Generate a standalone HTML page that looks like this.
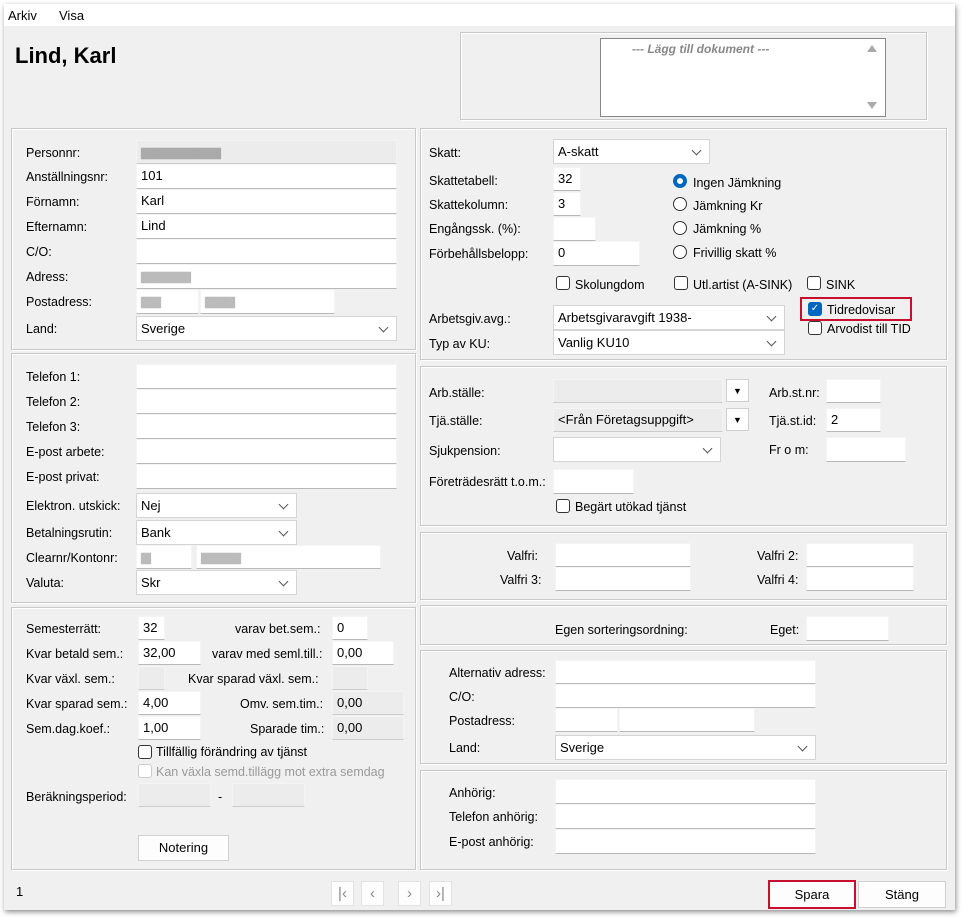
<!DOCTYPE html>
<html><head><meta charset="utf-8"><style>
*{margin:0;padding:0;box-sizing:border-box}
body{width:965px;height:919px;background:#fff;position:relative;font-family:"Liberation Sans",sans-serif;font-size:12px;color:#000;overflow:hidden}
.win{position:absolute;left:4px;top:4px;width:951px;height:906px;background:#f0f0f0;box-shadow:1px 2px 5px rgba(0,0,0,.45)}
.menu{position:absolute;left:4px;top:4px;width:951px;height:22px;background:#fff}
.a{position:absolute;white-space:nowrap}
.g{position:absolute;border:1px solid #c8c8c8;box-shadow:inset 1px 1px 0 #fff,1px 1px 0 #fff}
.i{position:absolute;background:#fff;border:1px solid #f4f4f4;border-bottom:1px solid #b8b8b8;padding:2px 0 0 4px;font-size:13px;line-height:18px}
.gr{background:#ececec;border-bottom-color:#ccc}
.d{position:absolute;background:#fff;border:1px solid #d4d4d4;padding:3px 0 0 4px;font-size:13px;line-height:17px}
.d:after{content:"";position:absolute;right:9px;top:7px;width:6px;height:6px;border-right:1px solid #555;border-bottom:1px solid #555;transform:rotate(45deg)}
.l{position:absolute;white-space:nowrap;font-size:12.5px}
.cb{position:absolute;width:14px;height:14px;border:1px solid #333;border-radius:3px;background:#fff}
.rb{position:absolute;width:14px;height:14px;border:1px solid #333;border-radius:50%;background:#fff}
.btn{position:absolute;background:#fdfdfd;border:1px solid #d0d0d0;text-align:center;font-size:13px}
.bl{color:#bbb}
</style></head><body>
<div class="win"></div>
<div class="menu"></div>
<div class="a" style="left:8px;top:8px;font-size:13px">Arkiv</div>
<div class="a" style="left:59px;top:8px;font-size:13px">Visa</div>
<div class="a" style="left:15px;top:43px;font-size:22px;font-weight:bold">Lind, Karl</div>

<div class="g" style="left:460px;top:32px;width:467px;height:88px"></div>
<div class="a" style="left:600px;top:38px;width:286px;height:79px;background:#fff;border:1px solid #888"></div>
<div class="a" style="left:632px;top:42px;font-size:12px;font-style:italic;font-weight:bold;color:#888">--- Lägg till dokument ---</div>
<div class="a" style="left:867px;top:45px;width:0;height:0;border-left:5px solid transparent;border-right:5px solid transparent;border-bottom:7px solid #aaa"></div>
<div class="a" style="left:867px;top:102px;width:0;height:0;border-left:5px solid transparent;border-right:5px solid transparent;border-top:7px solid #aaa"></div>

<div class="g" style="left:11px;top:128px;width:405px;height:222px"></div>
<div class="g" style="left:11px;top:353px;width:405px;height:250px"></div>
<div class="g" style="left:11px;top:607px;width:405px;height:263px"></div>

<div class="l" style="left:26px;top:146px">Personnr:</div>
<div class="i gr bl" style="left:136px;top:140px;width:261px;height:24px;color:#aaa">▆▆▆▆▆▆▆▆</div>
<div class="l" style="left:26px;top:170px">Anställningsnr:</div>
<div class="i" style="left:136px;top:164px;width:261px;height:25px">101</div>
<div class="l" style="left:26px;top:195px">Förnamn:</div>
<div class="i" style="left:136px;top:189px;width:261px;height:25px">Karl</div>
<div class="l" style="left:26px;top:220px">Efternamn:</div>
<div class="i" style="left:136px;top:214px;width:261px;height:25px">Lind</div>
<div class="l" style="left:26px;top:245px">C/O:</div>
<div class="i" style="left:136px;top:239px;width:261px;height:25px"></div>
<div class="l" style="left:26px;top:270px">Adress:</div>
<div class="i bl" style="left:136px;top:264px;width:261px;height:25px">▆▆▆▆▆</div>
<div class="l" style="left:26px;top:295px">Postadress:</div>
<div class="i bl" style="left:136px;top:289px;width:63px;height:25px">▆▆</div>
<div class="i bl" style="left:200px;top:289px;width:135px;height:25px">▆▆▆</div>
<div class="l" style="left:26px;top:322px">Land:</div>
<div class="d" style="left:136px;top:316px;width:261px;height:25px">Sverige</div>

<div class="l" style="left:26px;top:370px">Telefon 1:</div>
<div class="i" style="left:136px;top:364px;width:261px;height:25px"></div>
<div class="l" style="left:26px;top:395px">Telefon 2:</div>
<div class="i" style="left:136px;top:389px;width:261px;height:25px"></div>
<div class="l" style="left:26px;top:420px">Telefon 3:</div>
<div class="i" style="left:136px;top:414px;width:261px;height:25px"></div>
<div class="l" style="left:26px;top:445px">E-post arbete:</div>
<div class="i" style="left:136px;top:439px;width:261px;height:25px"></div>
<div class="l" style="left:26px;top:470px">E-post privat:</div>
<div class="i" style="left:136px;top:464px;width:261px;height:25px"></div>
<div class="l" style="left:26px;top:499px">Elektron. utskick:</div>
<div class="d" style="left:136px;top:493px;width:161px;height:25px">Nej</div>
<div class="l" style="left:26px;top:526px">Betalningsrutin:</div>
<div class="d" style="left:136px;top:520px;width:161px;height:25px">Bank</div>
<div class="l" style="left:26px;top:551px">Clearnr/Kontonr:</div>
<div class="i bl" style="left:136px;top:545px;width:56px;height:24px">▆</div>
<div class="i bl" style="left:196px;top:545px;width:185px;height:24px">▆▆▆▆</div>
<div class="l" style="left:26px;top:576px">Valuta:</div>
<div class="d" style="left:136px;top:570px;width:161px;height:25px">Skr</div>

<div class="l" style="left:26px;top:622px">Semesterrätt:</div>
<div class="i" style="left:138px;top:616px;width:27px;height:24px">32</div>
<div class="l" style="left:235px;top:622px">varav bet.sem.:</div>
<div class="i" style="left:332px;top:616px;width:36px;height:24px">0</div>
<div class="l" style="left:26px;top:647px">Kvar betald sem.:</div>
<div class="i" style="left:138px;top:641px;width:63px;height:24px">32,00</div>
<div class="l" style="left:212px;top:647px">varav med seml.till.:</div>
<div class="i" style="left:332px;top:641px;width:62px;height:24px">0,00</div>
<div class="l" style="left:26px;top:672px">Kvar växl. sem.:</div>
<div class="i gr" style="left:138px;top:666px;width:27px;height:24px"></div>
<div class="l" style="left:188px;top:672px">Kvar sparad växl. sem.:</div>
<div class="i gr" style="left:332px;top:666px;width:36px;height:24px"></div>
<div class="l" style="left:26px;top:697px">Kvar sparad sem.:</div>
<div class="i" style="left:138px;top:691px;width:63px;height:24px">4,00</div>
<div class="l" style="left:240px;top:697px">Omv. sem.tim.:</div>
<div class="i gr" style="left:332px;top:691px;width:72px;height:24px">0,00</div>
<div class="l" style="left:26px;top:722px">Sem.dag.koef.:</div>
<div class="i" style="left:138px;top:716px;width:63px;height:24px">1,00</div>
<div class="l" style="left:250px;top:722px">Sparade tim.:</div>
<div class="i gr" style="left:332px;top:716px;width:72px;height:24px">0,00</div>
<div class="cb" style="left:138px;top:745px"></div>
<div class="l" style="left:156px;top:745px">Tillfällig förändring av tjänst</div>
<div class="cb" style="left:138px;top:764px;border-color:#ccc"></div>
<div class="l" style="left:156px;top:765px;color:#999">Kan växla semd.tillägg mot extra semdag</div>
<div class="l" style="left:26px;top:790px">Beräkningsperiod:</div>
<div class="i gr" style="left:138px;top:783px;width:73px;height:24px"></div>
<div class="l" style="left:218px;top:790px">-</div>
<div class="i gr" style="left:232px;top:783px;width:73px;height:24px"></div>
<div class="btn" style="left:138px;top:835px;width:91px;height:26px;line-height:24px">Notering</div>

<div class="g" style="left:420px;top:128px;width:527px;height:232px"></div>
<div class="g" style="left:420px;top:366px;width:527px;height:160px"></div>
<div class="g" style="left:420px;top:532px;width:527px;height:68px"></div>
<div class="g" style="left:420px;top:605px;width:527px;height:40px"></div>
<div class="g" style="left:420px;top:650px;width:527px;height:114px"></div>
<div class="g" style="left:420px;top:770px;width:527px;height:100px"></div>

<div class="l" style="left:429px;top:146px">Skatt:</div>
<div class="d" style="left:553px;top:139px;width:157px;height:25px">A-skatt</div>
<div class="l" style="left:429px;top:174px">Skattetabell:</div>
<div class="i" style="left:553px;top:167px;width:28px;height:24px">32</div>
<div class="l" style="left:429px;top:198px">Skattekolumn:</div>
<div class="i" style="left:553px;top:192px;width:28px;height:24px">3</div>
<div class="l" style="left:429px;top:222px">Engångssk. (%):</div>
<div class="i" style="left:553px;top:217px;width:43px;height:24px"></div>
<div class="l" style="left:429px;top:247px">Förbehållsbelopp:</div>
<div class="i" style="left:553px;top:241px;width:87px;height:25px">0</div>
<div class="rb" style="left:673px;top:174px;border:4px solid #0067c0"></div>
<div class="l" style="left:693px;top:176px">Ingen Jämkning</div>
<div class="rb" style="left:673px;top:197px"></div>
<div class="l" style="left:693px;top:199px">Jämkning Kr</div>
<div class="rb" style="left:673px;top:221px"></div>
<div class="l" style="left:693px;top:222px">Jämkning %</div>
<div class="rb" style="left:673px;top:245px"></div>
<div class="l" style="left:693px;top:246px">Frivillig skatt %</div>
<div class="cb" style="left:556px;top:276px"></div>
<div class="l" style="left:575px;top:278px">Skolungdom</div>
<div class="cb" style="left:674px;top:276px"></div>
<div class="l" style="left:693px;top:278px">Utl.artist (A-SINK)</div>
<div class="cb" style="left:807px;top:276px"></div>
<div class="l" style="left:826px;top:278px">SINK</div>
<div class="a" style="left:800px;top:297px;width:112px;height:24px;border:2px solid #c8102e"></div>
<div class="cb" style="left:808px;top:302px;background:#0067c0;border-color:#0067c0;color:#fff;font-size:10px;line-height:12px;text-align:center">✓</div>
<div class="l" style="left:827px;top:303px">Tidredovisar</div>
<div class="cb" style="left:808px;top:321px"></div>
<div class="l" style="left:827px;top:322px">Arvodist till TID</div>
<div class="l" style="left:429px;top:312px">Arbetsgiv.avg.:</div>
<div class="d" style="left:553px;top:305px;width:232px;height:25px">Arbetsgivaravgift 1938-</div>
<div class="l" style="left:429px;top:337px">Typ av KU:</div>
<div class="d" style="left:553px;top:330px;width:232px;height:25px">Vanlig KU10</div>

<div class="l" style="left:429px;top:386px">Arb.ställe:</div>
<div class="i gr" style="left:553px;top:379px;width:170px;height:24px"></div>
<div class="btn" style="left:726px;top:379px;width:23px;height:23px;font-size:9px;line-height:22px">▼</div>
<div class="l" style="left:769px;top:386px">Arb.st.nr:</div>
<div class="i" style="left:826px;top:379px;width:55px;height:24px"></div>
<div class="l" style="left:429px;top:414px">Tjä.ställe:</div>
<div class="i gr" style="left:553px;top:408px;width:170px;height:24px">&lt;Från Företagsuppgift&gt;</div>
<div class="btn" style="left:726px;top:408px;width:23px;height:23px;font-size:9px;line-height:22px">▼</div>
<div class="l" style="left:769px;top:414px">Tjä.st.id:</div>
<div class="i" style="left:826px;top:408px;width:55px;height:24px">2</div>
<div class="l" style="left:429px;top:444px">Sjukpension:</div>
<div class="d" style="left:553px;top:437px;width:168px;height:25px"></div>
<div class="l" style="left:769px;top:443px">Fr o m:</div>
<div class="i" style="left:826px;top:437px;width:80px;height:25px"></div>
<div class="l" style="left:429px;top:475px">Företrädesrätt t.o.m.:</div>
<div class="i" style="left:553px;top:469px;width:81px;height:25px"></div>
<div class="cb" style="left:556px;top:499px"></div>
<div class="l" style="left:575px;top:500px">Begärt utökad tjänst</div>

<div class="l" style="left:507px;top:549px">Valfri:</div>
<div class="i" style="left:555px;top:543px;width:136px;height:24px"></div>
<div class="l" style="left:500px;top:573px">Valfri 3:</div>
<div class="i" style="left:555px;top:567px;width:136px;height:24px"></div>
<div class="l" style="left:757px;top:549px">Valfri 2:</div>
<div class="i" style="left:806px;top:543px;width:108px;height:24px"></div>
<div class="l" style="left:757px;top:573px">Valfri 4:</div>
<div class="i" style="left:806px;top:567px;width:108px;height:24px"></div>

<div class="l" style="left:555px;top:623px">Egen sorteringsordning:</div>
<div class="l" style="left:770px;top:623px">Eget:</div>
<div class="i" style="left:806px;top:616px;width:83px;height:25px"></div>

<div class="l" style="left:449px;top:666px">Alternativ adress:</div>
<div class="i" style="left:555px;top:660px;width:261px;height:24px"></div>
<div class="l" style="left:449px;top:690px">C/O:</div>
<div class="i" style="left:555px;top:684px;width:261px;height:24px"></div>
<div class="l" style="left:449px;top:714px">Postadress:</div>
<div class="i" style="left:555px;top:708px;width:63px;height:24px"></div>
<div class="i" style="left:619px;top:708px;width:136px;height:24px"></div>
<div class="l" style="left:449px;top:741px">Land:</div>
<div class="d" style="left:555px;top:735px;width:261px;height:25px">Sverige</div>

<div class="l" style="left:449px;top:786px">Anhörig:</div>
<div class="i" style="left:555px;top:779px;width:261px;height:25px"></div>
<div class="l" style="left:449px;top:810px">Telefon anhörig:</div>
<div class="i" style="left:555px;top:804px;width:261px;height:25px"></div>
<div class="l" style="left:449px;top:835px">E-post anhörig:</div>
<div class="i" style="left:555px;top:829px;width:261px;height:25px"></div>

<div class="l" style="left:16px;top:884px;font-size:13px">1</div>
<div class="btn" style="left:331px;top:881px;width:23px;height:25px;color:#888;font-size:15px;line-height:23px;border-color:#e2e2e2">|&lsaquo;</div>
<div class="btn" style="left:361px;top:881px;width:23px;height:25px;color:#888;font-size:15px;line-height:23px;border-color:#e2e2e2">&lsaquo;</div>
<div class="btn" style="left:398px;top:881px;width:23px;height:25px;color:#888;font-size:15px;line-height:23px;border-color:#e2e2e2">&rsaquo;</div>
<div class="btn" style="left:429px;top:881px;width:23px;height:25px;color:#888;font-size:15px;line-height:23px;border-color:#e2e2e2">&rsaquo;|</div>
<div class="btn" style="left:768px;top:880px;width:88px;height:29px;line-height:25px;border:2px solid #c8102e">Spara</div>
<div class="btn" style="left:858px;top:881px;width:88px;height:27px;line-height:25px">Stäng</div>
</body></html>
